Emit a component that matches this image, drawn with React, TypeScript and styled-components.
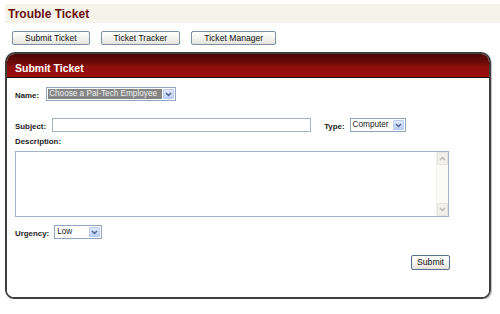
import styled, { createGlobalStyle } from "styled-components";

const GlobalStyle = createGlobalStyle`
    body {
        margin: 0;
        background: #fff;
        font-family: "Liberation Sans", Arial, sans-serif;
        color: #1a1a1a;
    }
`;

const Chevron = ({down = true}: {down?: boolean}) => (
    <svg width="7" height="5" viewBox="0 0 7 5">
        <path
            d={down ? "M1 1 L3.5 3.6 L6 1" : "M1 4 L3.5 1.4 L6 4"}
            fill="none"
            stroke="currentColor"
            strokeWidth="1.4"
        />
    </svg>
);

const Select = ({width, value, selected}: {width: number, value: string, selected?: boolean}) => (
    <SelectFrame $w={width}>
        <SelectValue $selected={selected}>{value}</SelectValue>
        <SelectArrow><Chevron/></SelectArrow>
    </SelectFrame>
);

const App = () => {
    return (
        <Page>
            <GlobalStyle/>
            <TitleBar>Trouble Ticket</TitleBar>

            <NavRow>
                <NavButton>Submit Ticket</NavButton>
                <NavButton>Ticket Tracker</NavButton>
                <NavButton>Ticket Manager</NavButton>
            </NavRow>

            <Panel>
                <PanelHeader>Submit Ticket</PanelHeader>
                <PanelBody>
                    {/* Name */}
                    <FieldRow>
                        <Label $gap={7}>Name:</Label>
                        <Select width={130} value="Choose a Pal-Tech Employee" selected/>
                    </FieldRow>

                    {/* Subject + type */}
                    <FieldRow $top={17}>
                        <Label $gap={6}>Subject:</Label>
                        <TextInput type="text"/>
                        <Label $gap={5} $left={13}>Type:</Label>
                        <Select width={56} value="Computer"/>
                    </FieldRow>

                    <BlockLabel>Description:</BlockLabel>
                    <TextArea>
                        <TextAreaField/>
                        <ScrollTrack>
                            <ScrollButton><Chevron down={false}/></ScrollButton>
                            <ScrollButton><Chevron/></ScrollButton>
                        </ScrollTrack>
                    </TextArea>

                    <FieldRow $top={8}>
                        <Label $gap={5}>Urgency:</Label>
                        <Select width={48} value="Low"/>
                    </FieldRow>

                    <SubmitRow>
                        <SubmitButton>Submit</SubmitButton>
                    </SubmitRow>
                </PanelBody>
            </Panel>
        </Page>
    );
}

export default App;


const Page = styled.div`
    padding-top: 4px;
    width: 500px;
`;

const TitleBar = styled.div`
    display: flex;
    align-items: center;
    height: 19px;
    margin-left: 5px;
    padding-left: 3px;
    background-color: #f6f3ea;
    color: #6a0f0f;
    font-size: 12px;
    font-weight: 700;
`;

const NavRow = styled.div`
    display: flex;
    gap: 11px;
    margin-top: 8px;
    padding-left: 12px;
`;

const NavButton = styled.button`
    height: 14px;
    padding: 0 12px;
    border: 1px solid #7b8fa6;
    border-radius: 2px;
    background: linear-gradient(#ffffff, #f1f1ec 60%, #e2e1da);
    font-family: inherit;
    font-size: 8.6px;
    line-height: 12px;
    color: #111;
`;

const Panel = styled.div`
    margin: 7px 9px 0 5px;
    border: 2px solid #3e3e3e;
    border-radius: 10px 10px 9px 9px;
    overflow: hidden;
    box-shadow: 1px 1px 1px rgba(0, 0, 0, .25);
`;

const PanelHeader = styled.div`
    display: flex;
    align-items: center;
    height: 24px;
    padding: 4px 0 0 8px;
    box-sizing: border-box;
    border-bottom: 1px solid #151515;
    background: linear-gradient(#4c0707, #6a0a09 35%, #900e0b 60%, #9a100b);
    color: #fff;
    font-size: 10.5px;
    font-weight: 700;
`;

const PanelBody = styled.div`
    display: flex;
    flex-direction: column;
    padding: 9px 8px 27px 8px;
    background: #fff;
`;

const FieldRow = styled.div<{ $top?: number }>`
    display: flex;
    align-items: center;
    height: 14px;
    margin-top: ${props => props.$top || 0}px;
`;

const Label = styled.span<{ $gap?: number, $left?: number }>`
    margin-left: ${props => props.$left || 0}px;
    margin-right: ${props => props.$gap || 6}px;
    padding-top: 2px;
    font-size: 7.9px;
    font-weight: 700;
    color: #1c1c1c;
`;

const BlockLabel = styled(Label)`
    margin-top: 5px;
    line-height: 9px;
    padding-top: 0;
`;

const SelectFrame = styled.div<{ $w: number }>`
    display: flex;
    width: ${props => props.$w}px;
    height: 14px;
    box-sizing: border-box;
    padding: 1px;
    border: 1px solid #8ea6c4;
    background: #fff;
`;

const SelectValue = styled.span<{ $selected?: boolean }>`
    flex: 1;
    padding-left: 1px;
    font-size: 8.2px;
    line-height: 10px;
    white-space: nowrap;
    color: #222;

    ${props => props.$selected && `
        background-color: #858585;
        color: #f0f0f0;
    `}
`;

const SelectArrow = styled.span`
    display: flex;
    align-items: center;
    justify-content: center;
    flex-shrink: 0;
    width: 11px;
    margin-left: 1px;
    box-sizing: border-box;
    border: 1px solid #b9cbf3;
    border-radius: 1px;
    background: linear-gradient(#dfe8fe, #bccff9);
    color: #4b5f8a;
`;

const TextInput = styled.input`
    width: 259px;
    height: 14px;
    box-sizing: border-box;
    margin: 0;
    padding: 0 2px;
    border: 1px solid #a4b4c8;
    background: #fff;
    font-family: inherit;
    font-size: 8.7px;
    outline: none;
`;

const TextArea = styled.div`
    display: flex;
    width: 434px;
    height: 66px;
    box-sizing: border-box;
    margin-top: 5px;
    border: 1px solid #a4b4c8;
    background: #fff;
`;

const TextAreaField = styled.div`
    flex: 1;
`;

const ScrollTrack = styled.div`
    display: flex;
    flex-direction: column;
    justify-content: space-between;
    width: 11px;
    background: #fbfbf6;
    border-left: 1px solid #f1f1ea;
`;

const ScrollButton = styled.span`
    display: flex;
    align-items: center;
    justify-content: center;
    height: 11px;
    background: #f0efe8;
    border: 1px solid #e6e5dd;
    border-radius: 1px;
    color: #b9b9b0;
`;

const SubmitRow = styled.div`
    display: flex;
    justify-content: flex-end;
    width: 435px;
    margin-top: 16px;
`;

const SubmitButton = styled.button`
    height: 15px;
    padding: 0 5px;
    border: 1px solid #55708f;
    border-radius: 2px;
    background: linear-gradient(#ffffff, #f3f2ed 60%, #e4e2d9);
    font-family: inherit;
    font-size: 8.7px;
    line-height: 13px;
    color: #111;
`;
